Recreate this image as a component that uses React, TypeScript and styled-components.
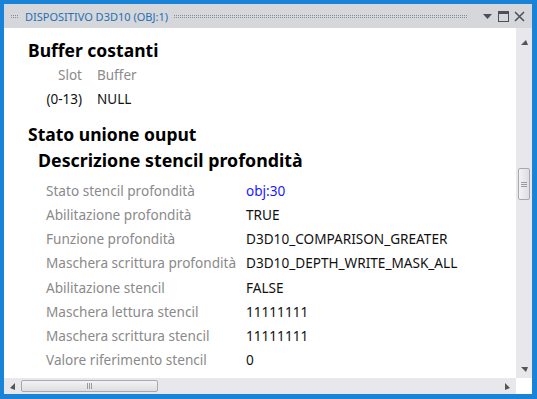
import React from 'react'
import styled, { createGlobalStyle } from 'styled-components'

/**********************************************************************/

const GlobalStyle = createGlobalStyle`
  html, body {
    margin: 0;
    padding: 0;
    overflow: hidden;
  }
  body {
    font-family: 'Segoe UI', 'Noto Sans', 'Open Sans', sans-serif;
  }
`

const Frame = styled.div`
  width: 537px;
  height: 399px;
  box-sizing: border-box;
  padding: 4px 5px 5px 4px;
  background-color: #1883d7;
  display: flex;
  flex-direction: column;
`

const TitleBar = styled.div`
  height: 24px;
  flex: none;
  display: flex;
  align-items: center;
  padding: 0 6px 0 7px;
  background-color: #d6d7db;
  gap: 6px;
`

const Grip = styled.div<{ $grow?: boolean }>`
  width: ${(p) => (p.$grow ? 'auto' : '8px')};
  flex: ${(p) => (p.$grow ? '1' : 'none')};
  height: 3px;
  margin-top: 1px;
  background-image: linear-gradient(90deg, #878b93 1px, transparent 1px),
    linear-gradient(90deg, #878b93 1px, transparent 1px);
  background-size: 2px 1px;
  background-position: 0 0, 0 2px;
  background-repeat: repeat-x;
`

const Title = styled.span`
  font-size: 11px;
  color: #2470b6;
  white-space: nowrap;
`

const TitleButtons = styled.div`
  display: flex;
  align-items: center;
  gap: 3px;
  margin-left: 8px;
`

const IconButton = styled.span`
  width: 13px;
  height: 13px;
  display: flex;
  align-items: center;
  justify-content: center;
`

const Body = styled.div`
  flex: 1;
  display: grid;
  grid-template-columns: 1fr 16px;
  grid-template-rows: 1fr 16px;
  min-height: 0;
`

const Content = styled.div`
  background: #fff;
  overflow: hidden;
  padding: 10px 0 0 24px;
  color: #000;
`

const Heading = styled.h2`
  margin: 0;
  font-size: 17.5px;
  font-weight: bold;
  line-height: 25px;
`

const SubHeading = styled.h3`
  margin: 0;
  font-size: 17.8px;
  font-weight: bold;
  line-height: 27px;
  padding-left: 10px;
`

const SlotTable = styled.div`
  display: grid;
  grid-template-columns: 54px auto;
  column-gap: 15px;
  font-size: 13.5px;
  padding: 0 0 11px 0;
  line-height: 24px;
`

const Cell = styled.span<{ $muted?: boolean; $right?: boolean }>`
  color: ${(p) => (p.$muted ? '#8b8b8b' : '#111')};
  text-align: ${(p) => (p.$right ? 'right' : 'left')};
`

const PropTable = styled.div`
  display: grid;
  grid-template-columns: 200px auto;
  font-size: 13.6px;
  line-height: 24.15px;
  padding: 5px 0 0 18px;
`

const PropLabel = styled.span`
  color: #8a8a8a;
  white-space: nowrap;
`

const PropValue = styled.span<{ $link?: boolean }>`
  color: ${(p) => (p.$link ? '#1a1aff' : '#111')};
  white-space: nowrap;
`

const VScroll = styled.div`
  background: #e8e8ec;
  display: flex;
  flex-direction: column;
  align-items: center;
  padding-top: 12px;
`

const VThumb = styled.div`
  margin-top: 123px;
  width: 12px;
  height: 32px;
  box-sizing: border-box;
  border: 1px solid #a9a9ad;
  border-radius: 2px;
  background: linear-gradient(to right, #f3f3f5, #dedee2);
  display: flex;
  align-items: center;
  justify-content: center;
`

const HScroll = styled.div`
  background: #e8e8ec;
  display: flex;
  align-items: center;
  padding-left: 6px;
`

const HThumb = styled.div`
  margin-left: 6px;
  width: 137px;
  height: 12px;
  box-sizing: border-box;
  border: 1px solid #a9a9ad;
  border-radius: 2px;
  background: linear-gradient(to bottom, #f3f3f5, #dedee2);
  display: flex;
  align-items: center;
  justify-content: center;
`

const Arrow = styled.svg<{ $push?: boolean }>`
  flex: none;
  margin-left: ${(p) => (p.$push ? 'auto' : '0')};
`

const Corner = styled.div`
  background: #fff;
`

/**********************************************************************/

const rows: [string, string, boolean?][] = [
  ['Stato stencil profondità', 'obj:30', true],
  ['Abilitazione profondità', 'TRUE'],
  ['Funzione profondità', 'D3D10_COMPARISON_GREATER'],
  ['Maschera scrittura profondità', 'D3D10_DEPTH_WRITE_MASK_ALL'],
  ['Abilitazione stencil', 'FALSE'],
  ['Maschera lettura stencil', '11111111'],
  ['Maschera scrittura stencil', '11111111'],
  ['Valore riferimento stencil', '0'],
]

const App: React.FC = () => {
  return (
    <>
      <GlobalStyle />
      <Frame>
        <TitleBar>
          <Grip />
          <Title>DISPOSITIVO D3D10 (OBJ:1)</Title>
          <Grip $grow />
          <TitleButtons>
            <IconButton>
              <svg width="9" height="5" viewBox="0 0 9 5">
                <path d="M0 0h9L4.5 5z" fill="#4b4f57" />
              </svg>
            </IconButton>
            <IconButton>
              <svg width="11" height="11" viewBox="0 0 11 11">
                <rect x="0.5" y="0.5" width="10" height="10" fill="none" stroke="#4b4f57" />
                <rect x="0" y="0" width="11" height="3" fill="#4b4f57" />
              </svg>
            </IconButton>
            <IconButton>
              <svg width="11" height="11" viewBox="0 0 11 11">
                <path d="M1 1l9 9M10 1l-9 9" stroke="#4b4f57" strokeWidth="1.5" />
              </svg>
            </IconButton>
          </TitleButtons>
        </TitleBar>
        <Body>
          <Content>
            <Heading>Buffer costanti</Heading>
            <SlotTable>
              <Cell $muted $right>Slot</Cell>
              <Cell $muted>Buffer</Cell>
              <Cell $right>(0-13)</Cell>
              <Cell>NULL</Cell>
            </SlotTable>
            <Heading>Stato unione ouput</Heading>
            <SubHeading>Descrizione stencil profondità</SubHeading>
            <PropTable>
              {rows.map(([label, value, link]) => (
                <React.Fragment key={label}>
                  <PropLabel>{label}</PropLabel>
                  <PropValue $link={link}>{value}</PropValue>
                </React.Fragment>
              ))}
            </PropTable>
          </Content>
          <VScroll>
            <svg width="7" height="5" viewBox="0 0 7 5">
              <path d="M7 5H0L5 0z" fill="#555" />
            </svg>
            <VThumb>
              <svg width="6" height="7" viewBox="0 0 6 7">
                <path d="M0 1.5h6M0 3.5h6M0 5.5h6" stroke="#9a9aa0" />
              </svg>
            </VThumb>
            <svg width="7" height="5" viewBox="0 0 7 5" style={{ marginTop: 'auto', marginBottom: 6 }}>
              <path d="M7 0H0l5 5z" fill="#555" />
            </svg>
          </VScroll>
          <HScroll>
            <Arrow width="5" height="7" viewBox="0 0 5 7">
              <path d="M5 0v7L0 5z" fill="#555" />
            </Arrow>
            <HThumb>
              <svg width="7" height="6" viewBox="0 0 7 6">
                <path d="M1.5 0v6M3.5 0v6M5.5 0v6" stroke="#9a9aa0" />
              </svg>
            </HThumb>
            <Arrow $push width="5" height="7" viewBox="0 0 5 7" style={{ marginRight: 6 }}>
              <path d="M0 0v7l5-2z" fill="#555" />
            </Arrow>
          </HScroll>
          <Corner />
        </Body>
      </Frame>
    </>
  )
}

export default App
